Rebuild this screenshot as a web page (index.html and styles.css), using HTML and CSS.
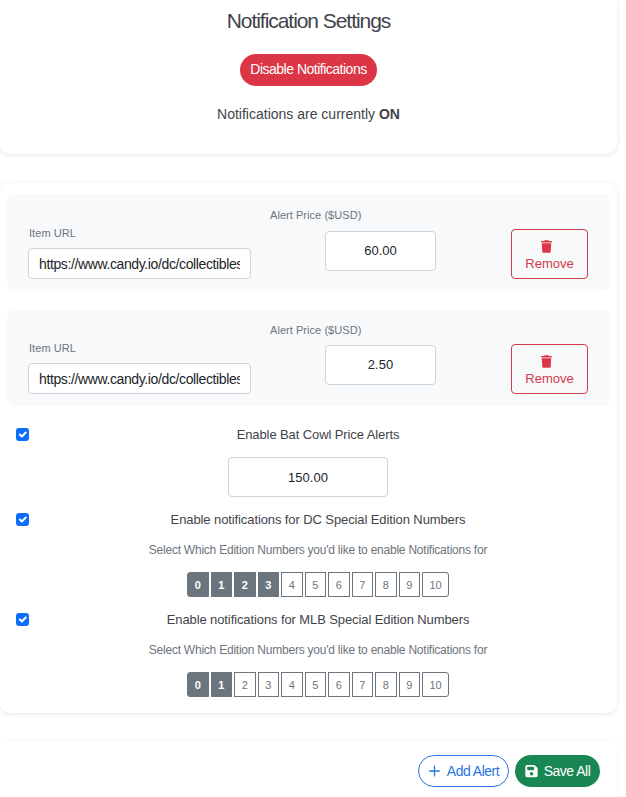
FILE: index.html
```html
<!DOCTYPE html>
<html lang="en">
<head>
<meta charset="utf-8">
<title>Notification Settings</title>
<link rel="stylesheet" href="styles.css">
</head>
<body>
<main class="page">
  <section class="card status-card">
    <h2 class="title">Notification Settings</h2>
    <button class="pill pill-danger" type="button"><span class="pill-label">Disable Notifications</span></button>
    <p class="status">Notifications are currently <strong>ON</strong></p>
  </section>

  <section class="card settings-card">
    <div class="alert-row">
      <div class="field">
        <label class="field-label">Item URL</label>
        <input class="input input-url" type="text" value="https://www.candy.io/dc/collectibles/batman-cowl-edition">
      </div>
      <div class="field field-price">
        <label class="field-label">Alert Price ($USD)</label>
        <input class="input input-price" type="text" value="60.00">
      </div>
      <button class="remove" type="button">
        <svg class="trash" viewBox="0 0 448 512"><path d="M135.2 17.7L128 32H32C14.3 32 0 46.3 0 64S14.3 96 32 96H416c17.7 0 32-14.3 32-32s-14.3-32-32-32H320l-7.2-14.3C307.4 6.8 296.3 0 284.2 0H163.8c-12.1 0-23.2 6.8-28.6 17.7zM416 128H32L53.2 467c1.6 25.3 22.6 45 47.9 45H346.9c25.3 0 46.3-19.7 47.9-45L416 128z"/></svg>
        <span>Remove</span>
      </button>
    </div>

    <div class="alert-row alert-row-last">
      <div class="field">
        <label class="field-label">Item URL</label>
        <input class="input input-url" type="text" value="https://www.candy.io/dc/collectibles/batman-cowl-edition">
      </div>
      <div class="field field-price">
        <label class="field-label">Alert Price ($USD)</label>
        <input class="input input-price" type="text" value="2.50">
      </div>
      <button class="remove" type="button">
        <svg class="trash" viewBox="0 0 448 512"><path d="M135.2 17.7L128 32H32C14.3 32 0 46.3 0 64S14.3 96 32 96H416c17.7 0 32-14.3 32-32s-14.3-32-32-32H320l-7.2-14.3C307.4 6.8 296.3 0 284.2 0H163.8c-12.1 0-23.2 6.8-28.6 17.7zM416 128H32L53.2 467c1.6 25.3 22.6 45 47.9 45H346.9c25.3 0 46.3-19.7 47.9-45L416 128z"/></svg>
        <span>Remove</span>
      </button>
    </div>

    <div class="toggle toggle-first">
      <input class="check" type="checkbox" checked>
      <span class="toggle-text">Enable Bat Cowl Price Alerts</span>
    </div>
    <input class="input input-num input-cowl" type="text" value="150.00">

    <div class="toggle">
      <input class="check" type="checkbox" checked>
      <span class="toggle-text">Enable notifications for DC Special Edition Numbers</span>
    </div>
    <p class="hint">Select Which Edition Numbers you'd like to enable Notifications for</p>
    <div class="numbers">
      <span class="num on">0</span><span class="num on">1</span><span class="num on">2</span><span class="num on">3</span><span class="num">4</span><span class="num">5</span><span class="num">6</span><span class="num">7</span><span class="num">8</span><span class="num">9</span><span class="num wide">10</span>
    </div>

    <div class="toggle">
      <input class="check" type="checkbox" checked>
      <span class="toggle-text">Enable notifications for MLB Special Edition Numbers</span>
    </div>
    <p class="hint">Select Which Edition Numbers you'd like to enable Notifications for</p>
    <div class="numbers">
      <span class="num on">0</span><span class="num on">1</span><span class="num">2</span><span class="num">3</span><span class="num">4</span><span class="num">5</span><span class="num">6</span><span class="num">7</span><span class="num">8</span><span class="num">9</span><span class="num wide">10</span>
    </div>
  </section>

  <footer class="actions">
    <button class="pill pill-outline" type="button">
      <svg class="btn-icon" viewBox="0 0 16 16"><path d="M8 2v12M2 8h12" fill="none" stroke="currentColor" stroke-width="1.6" stroke-linecap="round"/></svg>
      Add Alert
    </button>
    <button class="pill pill-success" type="button">
      <svg class="btn-icon" viewBox="0 0 448 512"><path fill="currentColor" d="M64 32C28.7 32 0 60.7 0 96V416c0 35.3 28.7 64 64 64H384c35.3 0 64-28.7 64-64V173.3c0-17-6.7-33.3-18.7-45.3L352 50.7C340 38.7 323.7 32 306.7 32H64zm0 96c0-17.7 14.3-32 32-32H288c17.7 0 32 14.3 32 32v64c0 17.7-14.3 32-32 32H96c-17.7 0-32-14.3-32-32V128zM224 288a64 64 0 1 1 0 128 64 64 0 1 1 0-128z"/></svg>
      Save All
    </button>
  </footer>
</main>
</body>
</html>
```

FILE: styles.css
```css
* { box-sizing: border-box; }

html, body { margin: 0; height: 100%; overflow: hidden; }

body {
  background: #fff;
  color: #3f4449;
  font-family: "Liberation Sans", Arial, sans-serif;
  font-size: 14px;
}

.page { width: 617px; }

.card {
  background: #fff;
  border-radius: 0 0 10px 10px;
  box-shadow: 0 1px 5px rgba(0, 0, 0, 0.1);
}

.status-card {
  height: 154px;
  display: flex;
  flex-direction: column;
  align-items: center;
  padding-top: 8px;
}

.title {
  margin: 0;
  font-size: 21px;
  font-weight: 400;
  line-height: 25px;
  letter-spacing: -1.05px;
  color: #3f4449;
}

.pill {
  display: inline-flex;
  align-items: center;
  justify-content: center;
  height: 32px;
  border-radius: 16px;
  border: 1px solid transparent;
  font-family: inherit;
  font-size: 14px;
  letter-spacing: -0.5px;
  white-space: nowrap;
  padding: 0;
}

.pill-danger {
  width: 137px;
  margin-top: 21px;
  background: #dc3545;
  color: #fff;
}

.pill-label { padding-bottom: 2px; }

.status {
  margin: 20px 0 0;
  line-height: 17px;
  font-size: 14px;
  color: #3f4449;
}

.status strong { font-weight: 700; }

.settings-card {
  margin-top: 29px;
  height: 530px;
  padding: 11px 7px 0;
  border-radius: 10px;
}

.alert-row {
  height: 97px;
  margin-bottom: 19px;
  padding: 0 21px 12px 21px;
  background: #f8f9fa;
  border-radius: 8px;
  display: grid;
  grid-template-columns: 223px 222px 77px;
  column-gap: 19px;
  align-items: end;
}

.alert-row-last { height: 96px; margin-bottom: 0; }

.field { display: flex; flex-direction: column; }

.field-price { padding-bottom: 8px; }

.alert-row-last .field-price { padding-bottom: 9px; }

.field-label {
  font-size: 11px;
  line-height: 13px;
  color: #6c757d;
  margin-bottom: 8px;
  letter-spacing: 0.05px;
}

.field-price .field-label { margin-bottom: 9px; }

.alert-row-last .field-price .field-label { margin-bottom: 8px; }

.field:first-child .field-label { padding-left: 1px; }

.input {
  font-family: inherit;
  font-size: 13px;
  color: #212529;
  background: #fff;
  border: 1px solid #ced4da;
  border-radius: 4px;
  outline: none;
}

.input-url {
  width: 223px;
  height: 31px;
  padding: 0 10px;
  font-size: 14px;
  letter-spacing: -0.38px;
}

.input-price {
  width: 111px;
  height: 40px;
  margin-left: 55px;
  padding-bottom: 2px;
  text-align: center;
}

.remove {
  height: 50px;
  width: 77px;
  padding: 2px 0 0;
  display: flex;
  flex-direction: column;
  align-items: center;
  justify-content: center;
  gap: 3px;
  font-family: inherit;
  font-size: 13px;
  color: #d33a4a;
  background: transparent;
  border: 1px solid #d33a4a;
  border-radius: 4px;
}

.trash { width: 11px; height: 13px; fill: #dc3545; margin-right: 6px; }

.toggle {
  display: flex;
  align-items: center;
  height: 20px;
  margin-top: 12px;
  padding-left: 9px;
}

.toggle-first { margin-top: 18px; }

.check {
  appearance: none;
  flex: none;
  width: 13px;
  height: 13px;
  margin: 0;
  border-radius: 3px;
  background: #0d6efd url("data:image/svg+xml,%3Csvg xmlns='http://www.w3.org/2000/svg' viewBox='0 0 20 20'%3E%3Cpath fill='none' stroke='%23fff' stroke-linecap='round' stroke-linejoin='round' stroke-width='3' d='M6 10l3 3 6-6'/%3E%3C/svg%3E") center / 100% no-repeat;
}

.toggle-text {
  flex: 1;
  text-align: center;
  font-size: 13px;
  line-height: 20px;
  padding: 1px 3px 0 0;
  letter-spacing: -0.1px;
}

.input-cowl {
  display: block;
  width: 160px;
  height: 40px;
  margin: 13px auto 0 221px;
  text-align: center;
}

.hint {
  margin: 13px 0 0;
  text-align: center;
  font-size: 12px;
  line-height: 16px;
  color: #6c757d;
  padding-left: 19px;
  letter-spacing: -0.23px;
}

.numbers {
  display: flex;
  gap: 2px;
  margin-top: 14px;
  margin-left: 180px;
}

.num {
  width: 21.5px;
  height: 25px;
  display: flex;
  align-items: center;
  justify-content: center;
  font-size: 11px;
  color: #6c757d;
  border: 1px solid #6c757d;
}

.num.on { background: #6c757d; color: #fff; font-weight: 700; }

.num:first-child { border-radius: 3px 0 0 3px; }

.num.wide { width: 27px; border-radius: 0 3px 3px 0; }

.actions {
  display: flex;
  justify-content: flex-end;
  gap: 6px;
  height: 60px;
  margin-top: 28px;
  padding: 14px 17px 0 0;
  background: #fff;
  box-shadow: 0 0 4px rgba(0, 0, 0, 0.04);
}

.pill-outline {
  width: 91px;
  gap: 6px;
  color: #2a75e0;
  background: #fff;
  border-color: #2a75e0;
}

.pill-success {
  width: 85px;
  gap: 6px;
  color: #fff;
  background: #198754;
}

.btn-icon { width: 13px; height: 14px; flex: none; }
```
